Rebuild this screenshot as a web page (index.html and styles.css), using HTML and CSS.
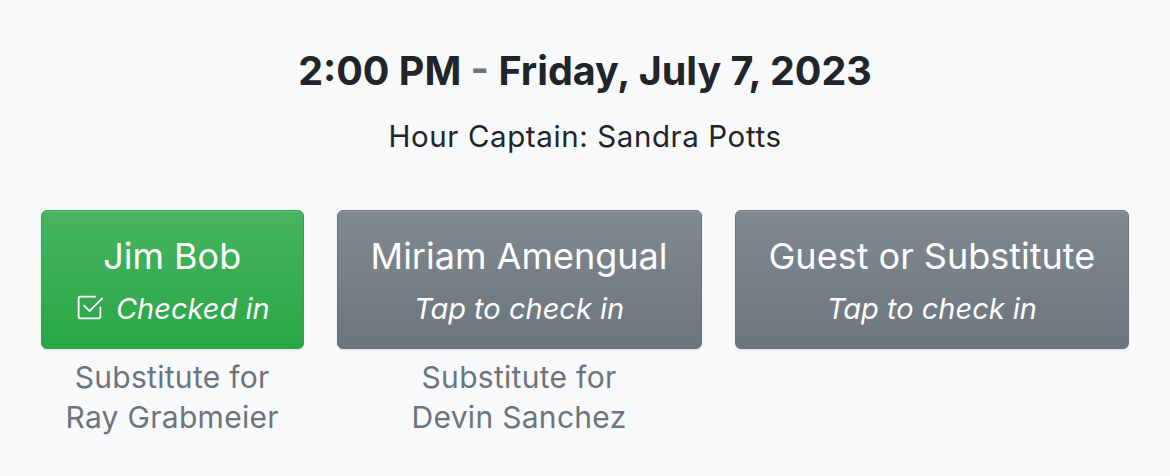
FILE: index.html
```html
<!DOCTYPE html>
<html lang="en">
<head>
    <meta charset="UTF-8">
    <meta name="viewport" content="width=device-width, initial-scale=1.0">
    <title>Hour Check-in</title>
    <link rel="stylesheet" href="styles.css">
</head>
<body>
    <div class="container">
        <h1 class="title">2:00 PM <span class="dash">-</span> Friday, July 7, 2023</h1>
        <p class="captain">Hour Captain: Sandra Potts</p>

        <div class="slots">
            <div class="slot">
                <button class="btn btn-success">
                    <span class="name">Jim Bob</span>
                    <span class="state">
                        <svg class="bi" viewBox="0 0 16 16" fill="currentColor" aria-hidden="true">
                            <path d="M3 14.5A1.5 1.5 0 0 1 1.5 13V3A1.5 1.5 0 0 1 3 1.5h8a.5.5 0 0 1 0 1H3a.5.5 0 0 0-.5.5v10a.5.5 0 0 0 .5.5h10a.5.5 0 0 0 .5-.5V8a.5.5 0 0 1 1 0v5a1.5 1.5 0 0 1-1.5 1.5H3z"/>
                            <path d="m8.354 10.354 7-7a.5.5 0 0 0-.708-.708L8 9.293 5.354 6.646a.5.5 0 1 0-.708.708l3 3a.5.5 0 0 0 .708 0z"/>
                        </svg>
                        Checked in
                    </span>
                </button>
                <p class="note">Substitute for<br>Ray Grabmeier</p>
            </div>

            <div class="slot">
                <button class="btn btn-secondary">
                    <span class="name">Miriam Amengual</span>
                    <span class="state">Tap to check in</span>
                </button>
                <p class="note">Substitute for<br>Devin Sanchez</p>
            </div>

            <div class="slot">
                <button class="btn btn-secondary">
                    <span class="name">Guest or Substitute</span>
                    <span class="state">Tap to check in</span>
                </button>
            </div>
        </div>
    </div>
</body>
</html>
```

FILE: styles.css
```css
* {
    margin: 0;
    padding: 0;
    box-sizing: border-box;
}

body {
    font-family: Inter, "Noto Sans", sans-serif;
    background: #f8f9fa;
    color: #212529;
}

.container {
    padding-top: 48px;
    text-align: center;
}

.title {
    font-size: 39.5px;
    font-weight: 700;
    line-height: 1.2;
}

.dash {
    color: #6c757d;
}

.captain {
    margin-top: 19px;
    font-size: 29.5px;
    line-height: 1.5;
    letter-spacing: 0.6px;
}

.slots {
    margin-top: 51px;
    display: flex;
    justify-content: center;
    align-items: flex-start;
    gap: 33px;
}

.slot {
    display: flex;
    flex-direction: column;
    align-items: center;
}

.btn {
    display: flex;
    flex-direction: column;
    align-items: center;
    padding: 20px 33px 12px;
    border: 1px solid transparent;
    border-radius: 6px;
    font-family: inherit;
    color: #fff;
    cursor: pointer;
    box-shadow: inset 0 1px 0 rgba(255, 255, 255, 0.15), 0 1px 2px rgba(0, 0, 0, 0.1);
}

.btn-success {
    background: #28a745 linear-gradient(180deg, rgba(255, 255, 255, 0.15), rgba(255, 255, 255, 0));
    border-color: #28a745;
}

.btn-secondary {
    background: #6c757d linear-gradient(180deg, rgba(255, 255, 255, 0.15), rgba(255, 255, 255, 0));
    border-color: #6c757d;
}

.name {
    font-size: 36px;
    line-height: 50px;
}

.state {
    font-size: 29px;
    font-style: italic;
    line-height: 55px;
}

.bi {
    width: 1em;
    height: 1em;
    vertical-align: -0.125em;
    margin-right: 4px;
}

.note {
    margin-top: 8px;
    font-size: 30px;
    line-height: 40px;
    letter-spacing: 0.3px;
    color: #6c757d;
}
```
